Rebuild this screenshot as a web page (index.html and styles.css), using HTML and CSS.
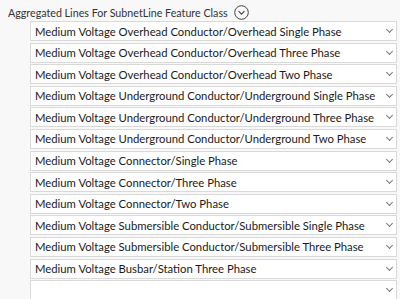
FILE: index.html
```html
<!DOCTYPE html>
<html lang="en">
<head>
    <meta charset="UTF-8">
    <title>Aggregated Lines</title>
    <link rel="stylesheet" href="styles.css">
</head>
<body>
    <div class="panel">
        <div class="header">
            <span class="title">Aggregated Lines For SubnetLine Feature Class</span>
            <svg class="toggle" width="15" height="15" viewBox="0 0 15 15">
                <circle cx="7.5" cy="7.5" r="6.8" fill="none" stroke="#444" stroke-width="1"/>
                <path d="M4.6 6.2 L7.5 9.1 L10.4 6.2" fill="none" stroke="#444" stroke-width="1.2"/>
            </svg>
        </div>
        <div class="list">
            <div class="combo"><span>Medium Voltage Overhead Conductor/Overhead Single Phase</span><i class="chev"></i></div>
            <div class="combo"><span>Medium Voltage Overhead Conductor/Overhead Three Phase</span><i class="chev"></i></div>
            <div class="combo"><span>Medium Voltage Overhead Conductor/Overhead Two Phase</span><i class="chev"></i></div>
            <div class="combo"><span>Medium Voltage Underground Conductor/Underground Single Phase</span><i class="chev"></i></div>
            <div class="combo"><span>Medium Voltage Underground Conductor/Underground Three Phase</span><i class="chev"></i></div>
            <div class="combo"><span>Medium Voltage Underground Conductor/Underground Two Phase</span><i class="chev"></i></div>
            <div class="combo"><span>Medium Voltage Connector/Single Phase</span><i class="chev"></i></div>
            <div class="combo"><span>Medium Voltage Connector/Three Phase</span><i class="chev"></i></div>
            <div class="combo"><span>Medium Voltage Connector/Two Phase</span><i class="chev"></i></div>
            <div class="combo"><span>Medium Voltage Submersible Conductor/Submersible Single Phase</span><i class="chev"></i></div>
            <div class="combo"><span>Medium Voltage Submersible Conductor/Submersible Three Phase</span><i class="chev"></i></div>
            <div class="combo"><span>Medium Voltage Busbar/Station Three Phase</span><i class="chev"></i></div>
            <div class="combo"><span></span><i class="chev"></i></div>
        </div>
    </div>
</body>
</html>
```

FILE: styles.css
```css
body {
    margin: 0;
    background: #f8f8f8;
    font-family: Lato, 'Noto Sans', sans-serif;
    color: #1a1a1a;
    overflow: hidden;
}

.panel {
    padding: 4px 3px 0 8px;
}

.header {
    display: flex;
    align-items: center;
    gap: 6px;
    height: 16px;
    font-size: 10.7px;
    color: #333;
}

.toggle {
    display: block;
}

.list {
    display: flex;
    flex-direction: column;
    gap: 1.6px;
    margin: 1px 0 0 22px;
}

.combo {
    display: flex;
    align-items: center;
    justify-content: space-between;
    gap: 6px;
    height: 18px;
    padding: 0 4px 0 4px;
    background: #fff;
    border: 1px solid #d9d9d9;
    font-size: 11.3px;
    white-space: nowrap;
}

.chev {
    flex-shrink: 0;
    width: 4px;
    height: 4px;
    border-right: 1.1px solid #777;
    border-bottom: 1.1px solid #777;
    transform: rotate(45deg);
    margin-top: -3px;
}
```
